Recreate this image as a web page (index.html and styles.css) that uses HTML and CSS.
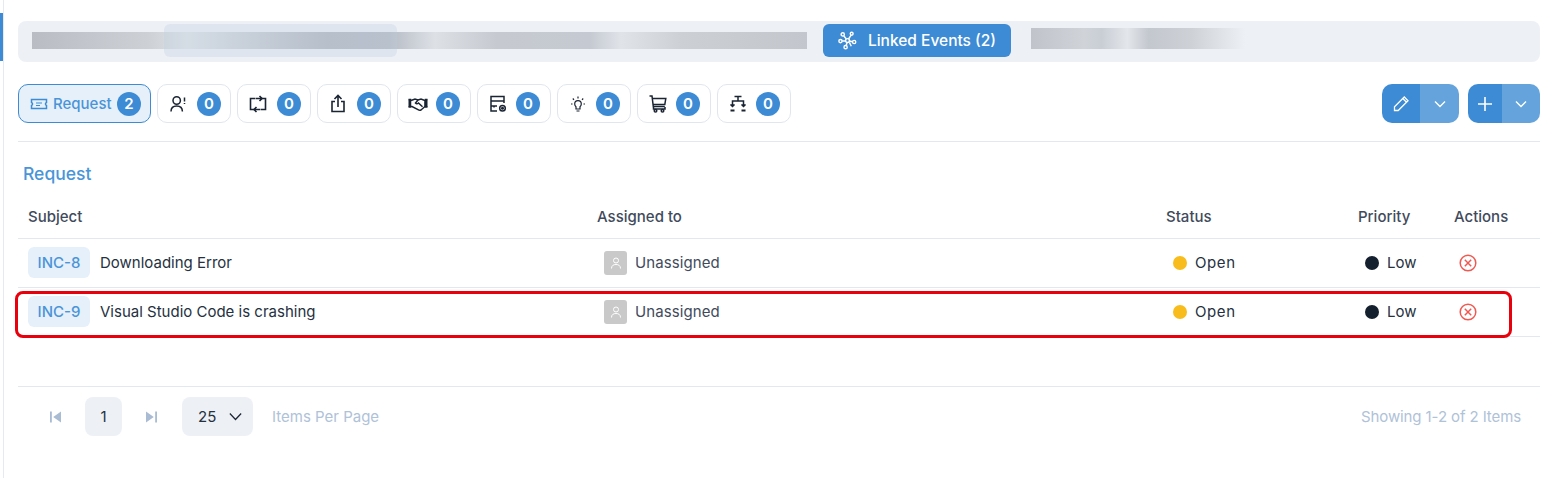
FILE: index.html
```html
<!DOCTYPE html>
<html lang="en">
<head>
  <meta charset="UTF-8">
  <title>Linked Events</title>
  <link rel="stylesheet" href="styles.css">
</head>
<body>
  <div class="side-mark"></div>
  <div class="page">
    <div class="topbar">
      <div class="blur-left">
        <div class="blur-tab"></div>
      </div>
      <button class="linked-btn">
        <svg width="19" height="19" viewBox="0 0 20 20" fill="none" stroke="#fff" stroke-width="1.5">
          <circle cx="5" cy="3.6" r="1.7"/><circle cx="14.4" cy="2.9" r="1.5"/><circle cx="2.6" cy="10.6" r="1.7"/>
          <circle cx="17" cy="11.6" r="1.7"/><circle cx="8" cy="17" r="1.7"/><circle cx="10" cy="10" r="2"/>
          <path d="M6 5l2.8 3.4M13.8 4.4l-2.7 4M4.3 10.5h3.7M12 10.5l3.3.8M9.7 12l-1.2 3.3M12 12l2 4"/>
        </svg>
        Linked Events (2)
      </button>
      <div class="blur-right"></div>
    </div>

    <div class="toolbar">
      <div class="tab active">
        <svg width="18" height="18" viewBox="0 0 18 18" fill="none" stroke="#3d8bd4" stroke-width="1.5"><path d="M1.5 4.5h15v3a1.6 1.6 0 0 0 0 3v3h-15v-3a1.6 1.600 0 0 0 0-3z"/><path d="M6 8h6M6 10.500h4" stroke-width="1.100"/></svg>
        <span class="tab-label">Request</span><span class="count">2</span>
      </div>
      <div class="tab">
        <span class="tab-icon"><svg width="16" height="18" viewBox="0 0 16 18" fill="none" stroke="#1a2433" stroke-width="1.500"><circle cx="6.700" cy="5.500" r="3.700"/><path d="M1 16.500c0-3.500 2-5.500 5.700-5.500s5.700 2 5.700 5.500"/><path d="M14.500 2.500v4M14.500 8v1"/></svg></span>
        <span class="count">0</span>
      </div>
      <div class="tab">
        <span class="tab-icon"><svg width="18" height="18" viewBox="0 0 18 18" fill="none" stroke="#1a2433" stroke-width="1.600"><path d="M6 3.500H1.500v11H6M12 14.500h4.500v-11H12"/><path d="M6.500 3.500h6M10.500 1l2.500 2.500-2.500 2.500M11.500 14.500h-6M7.500 12l-2.500 2.500 2.500 2.500"/></svg></span>
        <span class="count">0</span>
      </div>
      <div class="tab">
        <span class="tab-icon"><svg width="16" height="19" viewBox="0 0 16 19" fill="none" stroke="#1a2433" stroke-width="1.600"><path d="M5 7.500H2v10h12v-10h-3M8 13V1.500M4.500 5L8 1.500 11.500 5"/></svg></span>
        <span class="count">0</span>
      </div>
      <div class="tab tight">
        <span class="tab-icon"><svg width="20" height="16" viewBox="0 0 20 16" fill="none" stroke="#1a2433" stroke-width="1.500"><path d="M.5 3.500h2v7.500h-2M19.500 3.500h-2v7.500h2" fill="#1a2433"/><path d="M3 4.500l4-1.500 3 1 3-1 4 1.500v6l-4 3.500c-1 .6-2 .4-3-.3L4 10.500H3"/><path d="M10 4L7.500 7c.8 1 2 .9 3 0l4 3.700"/></svg></span>
        <span class="count">0</span>
      </div>
      <div class="tab tight">
        <span class="tab-icon"><svg width="18" height="18" viewBox="0 0 18 18" fill="none" stroke="#1a2433" stroke-width="1.500"><path d="M8 16H2V1.500h13v6.500M2 6h13M2 11h6M5 11.500v1"/><circle cx="13.500" cy="13.300" r="2.800"/><circle cx="13.500" cy="13.300" r=".8" fill="#1a2433"/></svg></span>
        <span class="count">0</span>
      </div>
      <div class="tab tight">
        <span class="tab-icon"><svg width="14" height="16" viewBox="0 0 14 16" fill="none" stroke="#1a2433" stroke-width="1.200"><path d="M5 13V10.800C4 10 3.700 9 3.700 8a3.300 3.300 0 0 1 6.600 0c0 1-.3 2-1.300 2.800V13zM5.500 15h3M7 .5V2.500M1.800 2.500l1.200 1.300M12.200 2.500L11 3.800M0 8h1.500M12.500 8H14"/></svg></span>
        <span class="count">0</span>
      </div>
      <div class="tab tight">
        <span class="tab-icon"><svg width="18" height="18" viewBox="0 0 18 18" fill="none" stroke="#1a2433" stroke-width="1.500"><path d="M.5 1H3l1.300 10.500h11.500"/><path d="M3.300 3.500h13.500l-1 6H4"/><path d="M4.500 12v2h11.500v-2"/><circle cx="6.500" cy="15.800" r="1.300"/><circle cx="13.500" cy="15.800" r="1.300"/></svg></span>
        <span class="count">0</span>
      </div>
      <div class="tab tight">
        <span class="tab-icon"><svg width="18" height="18" viewBox="0 0 18 18" fill="none" stroke="#1a2433" stroke-width="1.500"><path d="M5.500 1.500h7M9 1.500v4.500M3.500 11V6h11v5"/><path d="M1.500 9.500l2 2 2-2M12.500 9.500l2 2 2-2" fill="#1a2433"/><path d="M1.500 15.500h4M12.500 15.500h4" stroke-width="2"/></svg></span>
        <span class="count">0</span>
      </div>

      <div class="actions">
        <div class="split">
          <span class="split-main edit">
            <svg width="17" height="17" viewBox="0 0 17 17" fill="none" stroke="#fff" stroke-width="1.300"><path d="M1.500 15.500v-3.700L11.300 2l3.700 3.700-9.800 9.800zM9.800 3.500l3.700 3.700"/></svg>
          </span>
          <span class="split-caret edit-caret"><svg width="12" height="8" viewBox="0 0 12 8" fill="none" stroke="#fff" stroke-width="1.400"><path d="M1 1.500l5 5 5-5"/></svg></span>
        </div>
        <div class="split">
          <span class="split-main plus">
            <svg width="16" height="16" viewBox="0 0 16 16" fill="none" stroke="#fff" stroke-width="1.600"><path d="M8 1v14M1 8h14"/></svg>
          </span>
          <span class="split-caret plus-caret"><svg width="12" height="8" viewBox="0 0 12 8" fill="none" stroke="#fff" stroke-width="1.400"><path d="M1 1.500l5 5 5-5"/></svg></span>
        </div>
      </div>
    </div>

    <h3 class="section-title">Request</h3>

    <div class="table">
      <div class="row head">
        <div>Subject</div>
        <div>Assigned to</div>
        <div>Status</div>
        <div>Priority</div>
        <div>Actions</div>
      </div>
      <div class="row">
        <div class="subject"><span class="inc">INC-8</span>Downloading Error</div>
        <div class="assignee"><span class="avatar"><svg width="12" height="12" viewBox="0 0 12 12" fill="none" stroke="#fff" stroke-width="1"><circle cx="6" cy="3.500" r="2.500"/><path d="M1.500 11.500c0-2.800 1.800-4 4.500-4s4.500 1.200 4.500 4"/></svg></span>Unassigned</div>
        <div class="status"><span class="dot yellow"></span>Open</div>
        <div class="priority"><span class="dot navy"></span>Low</div>
        <div class="action"><svg width="18" height="18" viewBox="0 0 18 18" fill="none" stroke="#ee5a52" stroke-width="1.500"><circle cx="9" cy="9" r="7.800"/><path d="M5.800 5.800l6.400 6.400M12.200 5.800l-6.400 6.400"/></svg></div>
      </div>
      <div class="row marked">
        <div class="subject"><span class="inc">INC-9</span>Visual Studio Code is crashing</div>
        <div class="assignee"><span class="avatar"><svg width="12" height="12" viewBox="0 0 12 12" fill="none" stroke="#fff" stroke-width="1"><circle cx="6" cy="3.500" r="2.500"/><path d="M1.500 11.500c0-2.800 1.800-4 4.500-4s4.500 1.200 4.500 4"/></svg></span>Unassigned</div>
        <div class="status"><span class="dot yellow"></span>Open</div>
        <div class="priority"><span class="dot navy"></span>Low</div>
        <div class="action"><svg width="18" height="18" viewBox="0 0 18 18" fill="none" stroke="#ee5a52" stroke-width="1.500"><circle cx="9" cy="9" r="7.800"/><path d="M5.800 5.800l6.400 6.400M12.200 5.800l-6.400 6.400"/></svg></div>
        <div class="highlight"></div>
      </div>
    </div>

    <div class="pager">
      <svg class="pg-first" width="11" height="12" viewBox="0 0 12 12" fill="#a9bcd4" preserveAspectRatio="none"><path d="M0 .5h2v11H0zM12 .5v11L3.500 6z"/></svg>
      <span class="pg-num">1</span>
      <svg class="pg-last" width="11" height="12" viewBox="0 0 12 12" fill="#a9bcd4" preserveAspectRatio="none"><path d="M12 .5h-2v11h2zM0 .5v11L8.500 6z"/></svg>
      <span class="pg-size">25<svg width="13" height="9" viewBox="0 0 15 9" fill="none" stroke="#1a2433" stroke-width="1.400"><path d="M1 1l6.500 7L14 1"/></svg></span>
      <span class="pg-text">Items Per Page</span>
      <span class="pg-total">Showing 1-2 of 2 Items</span>
    </div>
  </div>
</body>
</html>
```

FILE: styles.css
```css
html, body {
  margin: 0;
  height: 100%;
  background: #fff;
  overflow: hidden;
}

body {
  font-family: Inter, "Open Sans", sans-serif;
  font-size: 15px;
  color: #253140;
  border-left: 1px solid #e6eaf0;
  margin-left: 3px;
  height: 478px;
  box-sizing: border-box;
}

.side-mark {
  position: absolute;
  left: 0;
  top: 13px;
  width: 3px;
  height: 48px;
  background: #3d8bd4;
}

.page {
  padding: 21px 13px 0 14px;
}

.topbar {
  height: 41px;
  box-sizing: border-box;
  background: #edf0f5;
  border-radius: 8px;
  display: flex;
  align-items: flex-start;
  padding: 3px 14px 0;
}

.blur-left {
  width: 775px;
  height: 17px;
  margin-top: 8px;
  background: linear-gradient(to right, #b9bcc3, #cdd1d6 15%, #dfe3e8 20%, #b4b9c2 38%, #b6bcc5 46%, #dde1e6 52%, #c6c9cf 60%, #c5cad2 72%, #e0e3e8 76%, #ccd0d4 84%, #c3c6cc 100%);
  position: relative;
}

.blur-tab {
  position: absolute;
  left: 132px;
  top: -8px;
  width: 233px;
  height: 33px;
  border-radius: 6px;
  background: rgba(190, 204, 222, 0.3);
}

.linked-btn {
  margin-left: 16px;
  width: 188px;
  height: 33px;
  border: none;
  border-radius: 6px;
  background: #3d8bd4;
  color: #fff;
  font: 500 15.5px Inter, sans-serif;
  display: flex;
  align-items: center;
  justify-content: center;
  gap: 11px;
  padding: 0;
}

.blur-right {
  margin: 4px 0 0 20px;
  width: 214px;
  height: 21px;
  background: linear-gradient(to right, #c0c3ca, #d0d4d9 25%, #c9ced5 33%, #e3e6ea 45%, #c3c7ce 55%, #ced2d7 75%, #edf0f5 100%);
}

.toolbar {
  margin-top: 22px;
  display: flex;
  gap: 6px;
  padding-bottom: 18px;
  border-bottom: 1px solid #e3e7ee;
}

.tab {
  width: 74px;
  height: 39px;
  box-sizing: border-box;
  border: 1px solid #e1e6ee;
  border-radius: 10px;
  display: flex;
  align-items: center;
  padding: 0 9px 0 10px;
  justify-content: space-between;
}

.tab.tight {
  padding-right: 10px;
}

.tab.active {
  width: 133px;
  background: #e6f0fa;
  border-color: #3d8bd4;
  color: #4a94d8;
  padding: 0 9px 0 11px;
}

.tab-label {
  font-weight: 500;
  margin-left: 5px;
  margin-right: auto;
}

.tab-icon {
  width: 20px;
  display: flex;
  justify-content: center;
}

.count {
  width: 24px;
  height: 24px;
  border-radius: 50%;
  background: #3d8bd4;
  color: #fff;
  font-weight: 600;
  font-size: 15px;
  display: flex;
  align-items: center;
  justify-content: center;
}

.actions {
  margin-left: auto;
  display: flex;
  gap: 9px;
}

.split {
  display: flex;
  height: 39px;
  border-radius: 10px;
  overflow: hidden;
}

.split-main {
  background: #3d8bd4;
  display: flex;
  align-items: center;
  justify-content: center;
}

.split-caret {
  background: #65a3dc;
  display: flex;
  align-items: center;
  justify-content: center;
}

.edit { width: 38px; }
.edit-caret { width: 39px; }
.plus { width: 34px; }
.plus-caret { width: 38px; }

.section-title {
  margin: 22px 0 0 5px;
  font-size: 17.5px;
  line-height: 20px;
  font-weight: 500;
  color: #4a94d8;
}

.table {
  margin-top: 22px;
}

.row {
  display: grid;
  grid-template-columns: 569px 569px 192px 96px 96px;
  height: 49px;
  padding-bottom: 1px;
  box-sizing: border-box;
  align-items: center;
  border-bottom: 1px solid #e3e7ee;
  position: relative;
}

.row > div {
  padding-left: 10px;
  display: flex;
  align-items: center;
}

.row.head {
  height: 33px;
  padding-bottom: 12px;
  font-weight: 500;
  color: #3f4b5c;
}

.inc {
  width: 62px;
  height: 31px;
  margin-right: 10px;
  border-radius: 6px;
  background: #e6f0fa;
  color: #4a94d8;
  font-weight: 500;
  display: flex;
  align-items: center;
  justify-content: center;
}

.assignee {
  color: #3f4b5c;
  letter-spacing: 0.1px;
}

.avatar {
  width: 23px;
  height: 24px;
  margin: 0 8px 0 7px;
  border-radius: 3px;
  background: #c9c9c9;
  display: flex;
  align-items: center;
  justify-content: center;
}

.dot {
  width: 14px;
  height: 14px;
  border-radius: 50%;
  margin-right: 8px;
}

.status { letter-spacing: 0.6px; }
.status .dot { margin-left: 7px; }
.priority .dot { margin-left: 7px; }
.yellow { background: #f8bd1c; }
.navy { background: #15202e; }
.action { padding-left: 15px !important; }

.highlight {
  position: absolute;
  left: -3px;
  top: 3px;
  width: 1497px;
  height: 47px;
  box-sizing: border-box;
  border: 3px solid #e8000c;
  border-radius: 8px;
  padding: 0 !important;
}

.pager {
  margin-top: 49px;
  border-top: 1px solid #e3e7ee;
  padding-top: 10px;
  display: flex;
  align-items: center;
  height: 39px;
}

.pg-first { margin-left: 32px; }

.pg-num {
  width: 37px;
  height: 39px;
  margin: 0 24px;
  border-radius: 8px;
  background: #edf0f5;
  display: flex;
  align-items: center;
  justify-content: center;
}

.pg-size {
  width: 71px;
  height: 39px;
  box-sizing: border-box;
  margin-left: 25px;
  padding: 0 11px 0 16px;
  border-radius: 8px;
  background: #edf0f5;
  display: flex;
  align-items: center;
  justify-content: space-between;
}

.pg-text {
  margin-left: 19px;
  color: #afc2d8;
}

.pg-total {
  margin-left: auto;
  margin-right: 19px;
  color: #afc2d8;
  letter-spacing: -0.1px;
}
```
